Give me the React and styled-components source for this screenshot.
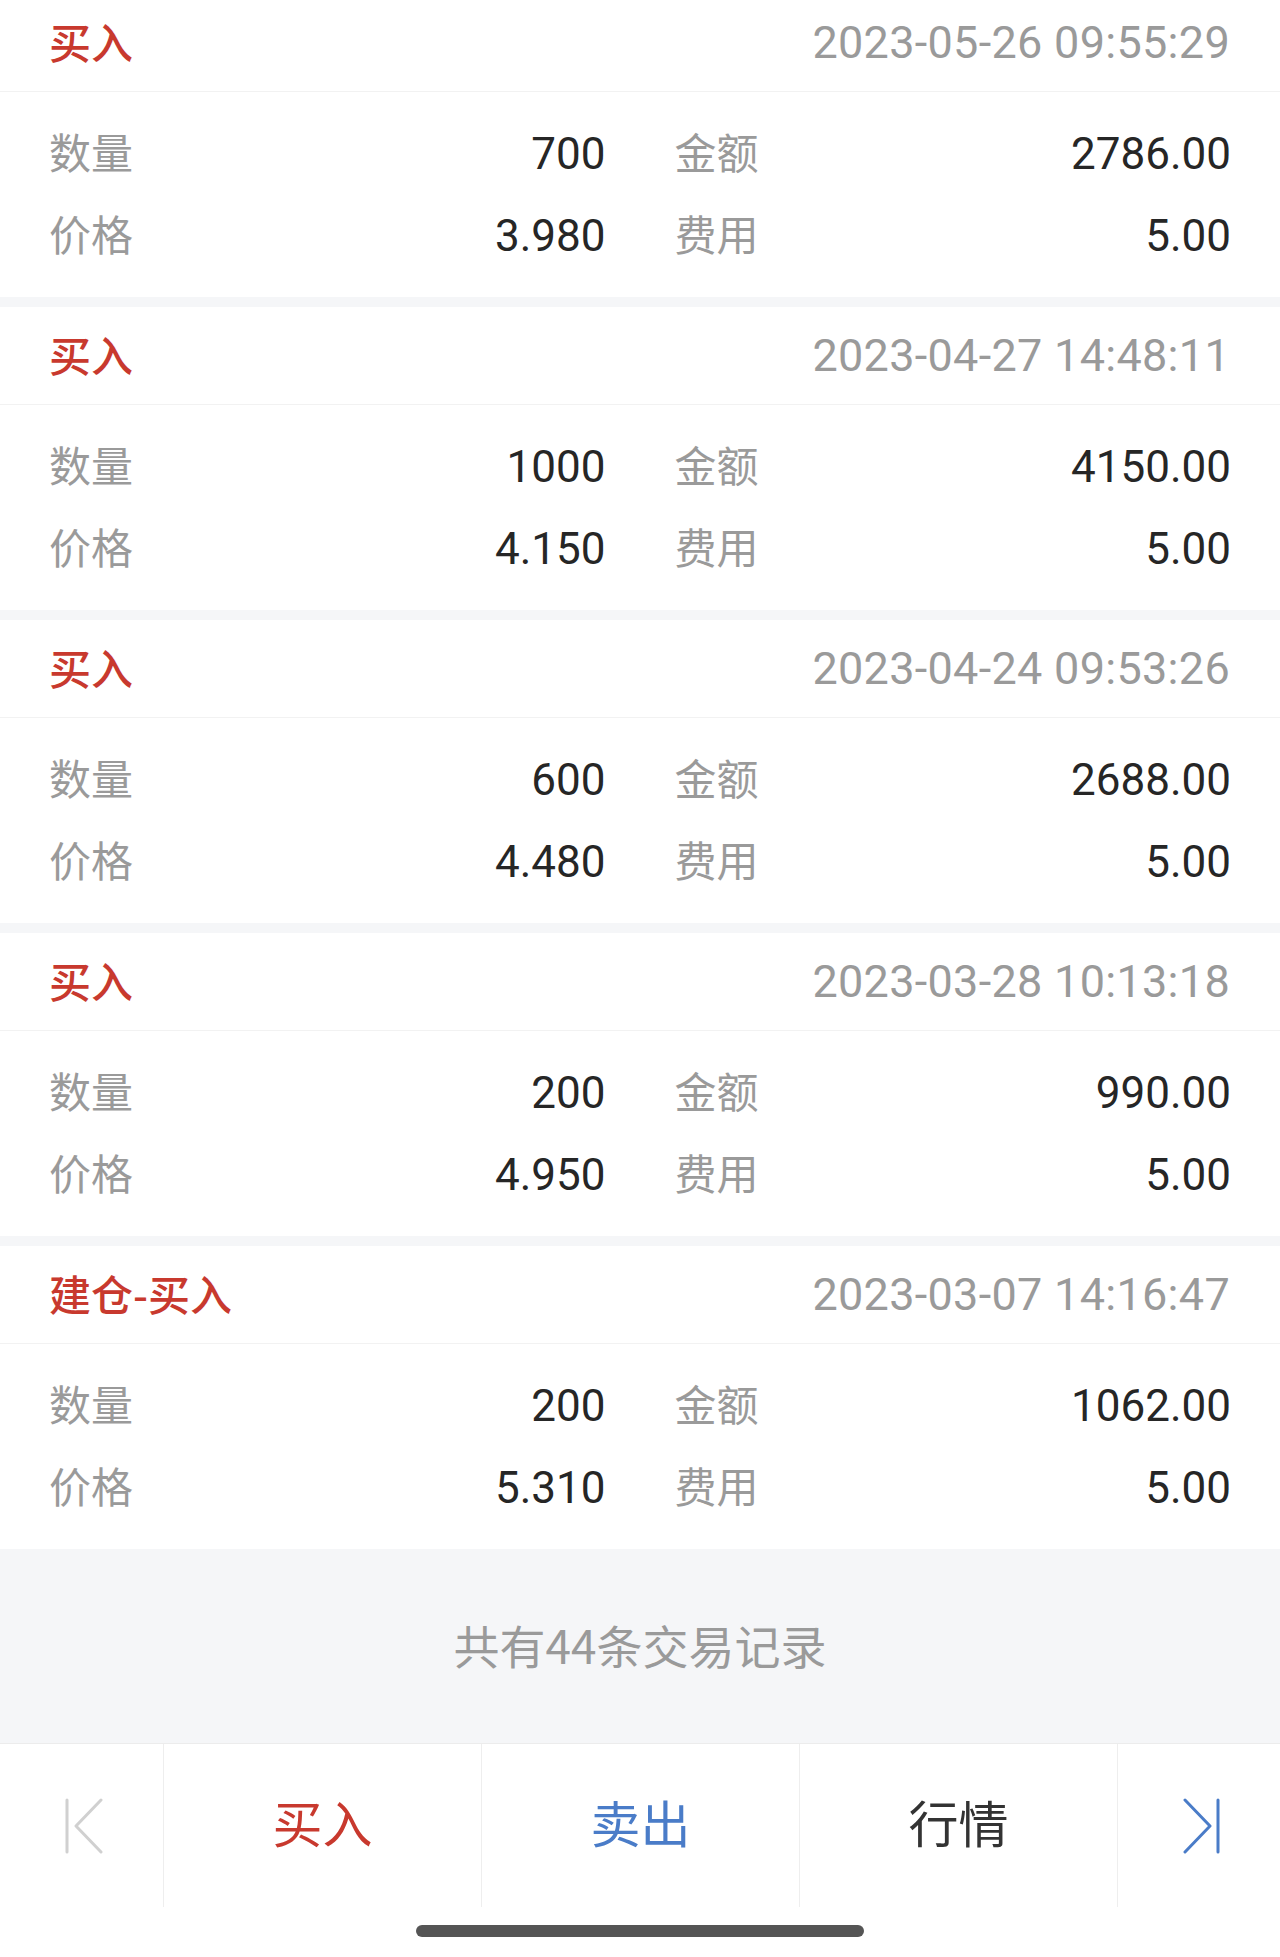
import React from 'react'
import styled, { createGlobalStyle } from 'styled-components'

const GlobalStyle = createGlobalStyle`
    html, body {
        margin: 0;
        padding: 0;
        background: #ffffff;
    }
    body {
        font-family: "Noto Sans CJK SC", "Noto Sans", sans-serif;
    }
`

const Page = styled.div`
    width: 1280px;
    height: 1957px;
    overflow: hidden;
    display: flex;
    flex-direction: column;
    background: #ffffff;
`

const List = styled.div`
    margin-top: -6px;
`

const Card = styled.div`
    background: #ffffff;
    border-bottom: ${p => (p.last ? 'none' : '10px solid #f5f6f8')};
`

const CardHeader = styled.div`
    height: 97px;
    border-bottom: 1px solid #f2f2f2;
    display: flex;
    align-items: center;
    justify-content: space-between;
    padding: 0 50px 0 49px;
`

const TradeType = styled.span`
    font-family: "Noto Sans CJK SC", sans-serif;
    font-size: 42px;
    font-weight: 500;
    color: #c8392e;
    padding-bottom: 5px;
`

const TradeTime = styled.span`
    font-family: Roboto, "Liberation Sans", sans-serif;
    font-size: 45px;
    letter-spacing: 0.3px;
    color: #9a9a9a;
`

const CardBody = styled.div`
    display: grid;
    grid-template-columns: 1fr 1fr;
    grid-auto-rows: 82px;
    column-gap: 69px;
    padding: 21px 49px 20px;
`

const Field = styled.div`
    display: flex;
    align-items: center;
    justify-content: space-between;
`

const Label = styled.span`
    font-family: "Noto Sans CJK SC", sans-serif;
    font-size: 42px;
    color: #9a9a9a;
    padding-bottom: 7px;
`

const Value = styled.span`
    font-family: Roboto, "Liberation Sans", sans-serif;
    font-size: 44px;
    color: #262626;
`

const Summary = styled.div`
    height: 194px;
    background: #f5f6f8;
    display: flex;
    align-items: center;
    justify-content: center;
    padding-bottom: 4px;
    box-sizing: border-box;
    font-family: "Noto Sans CJK SC", sans-serif;
    font-size: 46px;
    color: #9a9a9a;
`

const TabBar = styled.div`
    height: 163px;
    border-top: 1px solid #ececec;
    display: grid;
    grid-template-columns: 163px 1fr 1fr 1fr 163px;
`

const Tab = styled.div`
    display: flex;
    align-items: center;
    justify-content: center;
    border-left: ${p => (p.first ? 'none' : '1px solid #eeeeee')};
    padding-left: ${p => p.nudge || 0}px;
    padding-bottom: ${p => (p.icon ? 0 : 9)}px;
    font-family: "Noto Sans CJK SC", sans-serif;
    font-size: 50px;
    color: ${p => p.color || '#333333'};
`

const SafeArea = styled.div`
    flex: 1;
    display: flex;
    justify-content: center;
    padding-top: 18px;
`

const HomeIndicator = styled.div`
    width: 448px;
    height: 12px;
    border-radius: 6px;
    background: #555555;
`

const trades = [
    { type: '买入', time: '2023-05-26 09:55:29', qty: '700', amount: '2786.00', price: '3.980', fee: '5.00' },
    { type: '买入', time: '2023-04-27 14:48:11', qty: '1000', amount: '4150.00', price: '4.150', fee: '5.00' },
    { type: '买入', time: '2023-04-24 09:53:26', qty: '600', amount: '2688.00', price: '4.480', fee: '5.00' },
    { type: '买入', time: '2023-03-28 10:13:18', qty: '200', amount: '990.00', price: '4.950', fee: '5.00' },
    { type: '建仓-买入', time: '2023-03-07 14:16:47', qty: '200', amount: '1062.00', price: '5.310', fee: '5.00' },
]

const FirstIcon = () => (
    <svg width="40" height="56" viewBox="0 0 40 56" fill="none" stroke="#d0d0d0" strokeWidth="3" strokeLinecap="round" strokeLinejoin="round">
        <line x1="3" y1="2" x2="3" y2="54" />
        <polyline points="37,2 12,28 37,54" />
    </svg>
)

const LastIcon = () => (
    <svg width="40" height="56" viewBox="0 0 40 56" fill="none" stroke="#4a7cc8" strokeWidth="3" strokeLinecap="round" strokeLinejoin="round">
        <polyline points="4,2 29,28 4,54" />
        <line x1="37" y1="2" x2="37" y2="54" />
    </svg>
)

export default function App() {
    return (
        <Page>
            <GlobalStyle />
            <List>
                {trades.map((t, i) => (
                    <Card key={i} last={i === trades.length - 1}>
                        <CardHeader>
                            <TradeType>{t.type}</TradeType>
                            <TradeTime>{t.time}</TradeTime>
                        </CardHeader>
                        <CardBody>
                            <Field>
                                <Label>数量</Label>
                                <Value>{t.qty}</Value>
                            </Field>
                            <Field>
                                <Label>金额</Label>
                                <Value>{t.amount}</Value>
                            </Field>
                            <Field>
                                <Label>价格</Label>
                                <Value>{t.price}</Value>
                            </Field>
                            <Field>
                                <Label>费用</Label>
                                <Value>{t.fee}</Value>
                            </Field>
                        </CardBody>
                    </Card>
                ))}
            </List>
            <Summary>共有44条交易记录</Summary>
            <TabBar>
                <Tab first icon nudge={5}>
                    <FirstIcon />
                </Tab>
                <Tab color="#c8392e">买入</Tab>
                <Tab color="#4a7cc8">卖出</Tab>
                <Tab color="#333333">行情</Tab>
                <Tab icon nudge={3}>
                    <LastIcon />
                </Tab>
            </TabBar>
            <SafeArea>
                <HomeIndicator />
            </SafeArea>
        </Page>
    )
}
